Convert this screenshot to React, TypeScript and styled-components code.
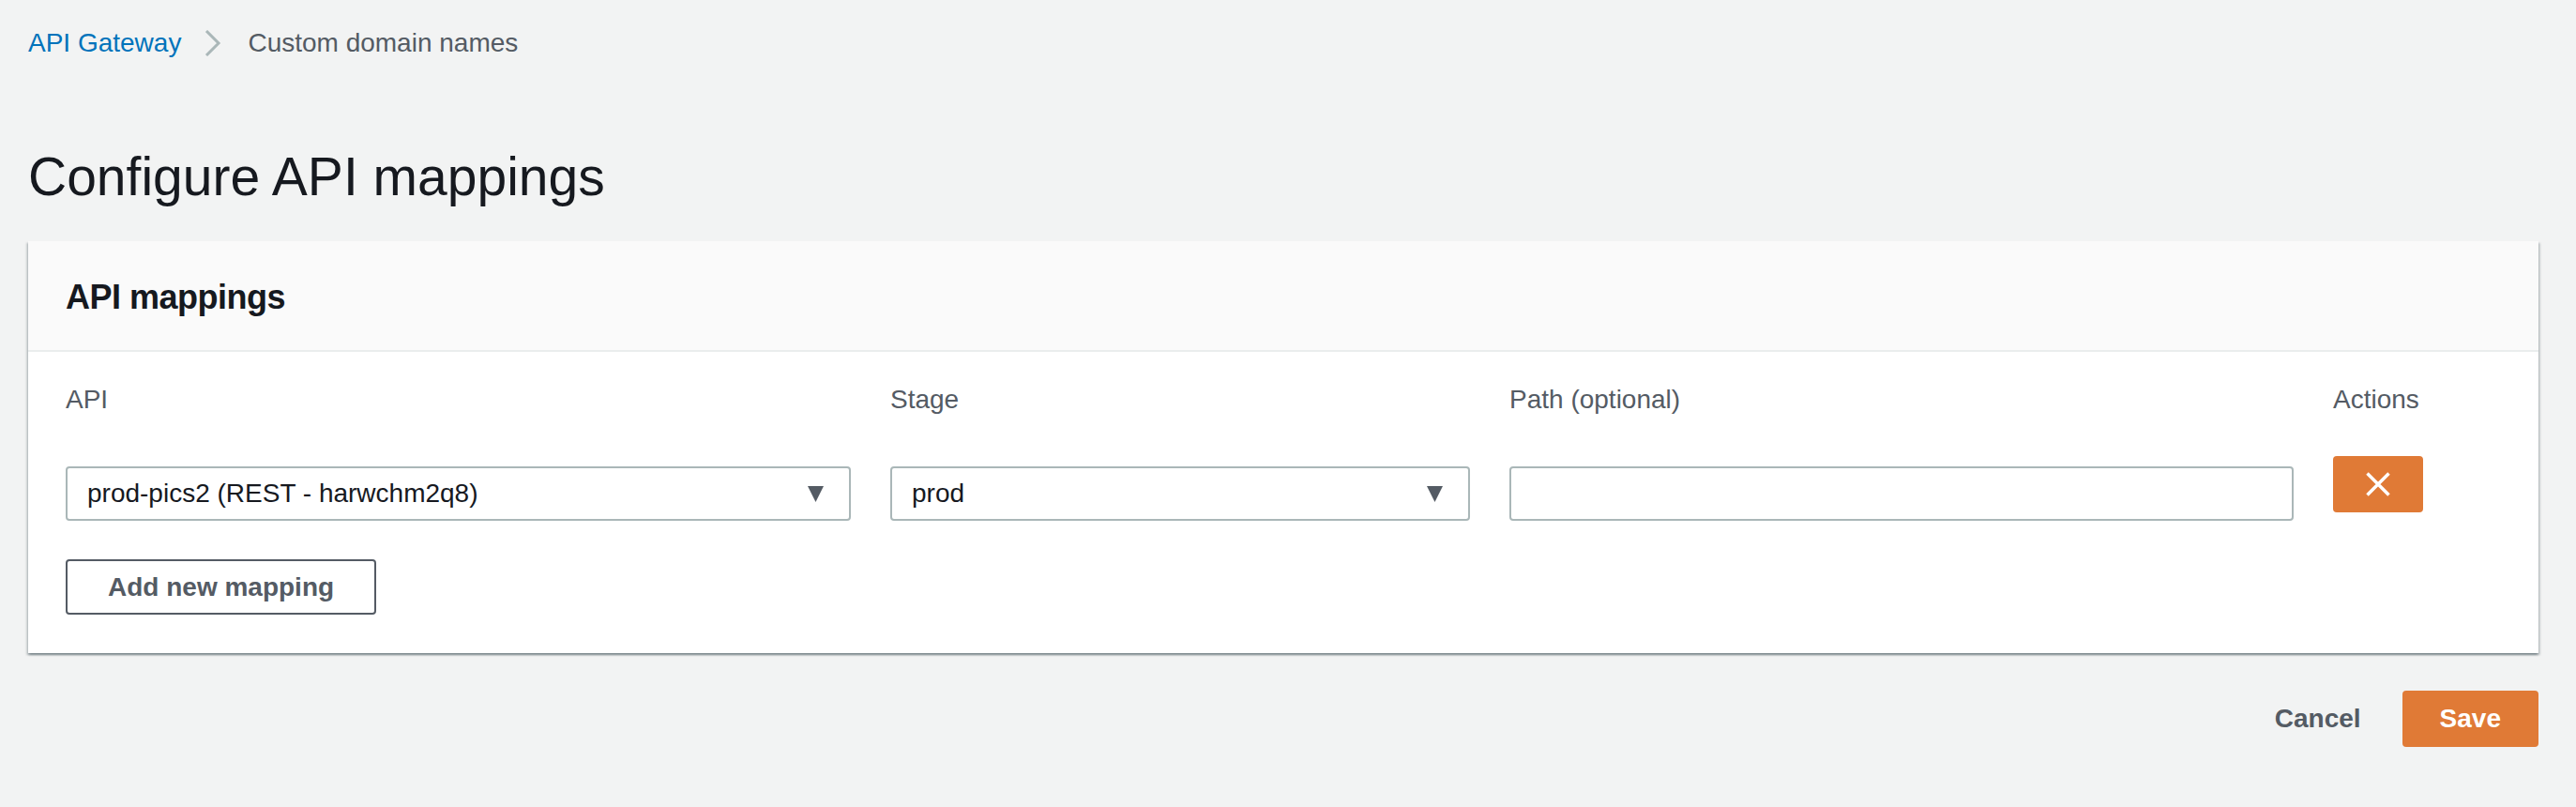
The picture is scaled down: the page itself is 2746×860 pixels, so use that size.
import React from "react";
import styled, { createGlobalStyle } from "styled-components";

const GlobalStyle = createGlobalStyle`
  html, body {
    margin: 0;
    padding: 0;
    background: #f2f3f3;
  }
  body {
    font-family: "Liberation Sans", Arial, sans-serif;
    color: #16191f;
  }
  * { box-sizing: border-box; }
`;

const Page = styled.div`
  padding: 26px 40px 40px 30px;
  min-height: 860px;
`;

const Breadcrumbs = styled.nav`
  display: flex;
  align-items: center;
  font-size: 28px;
  line-height: 40px;
  height: 40px;
`;

const Crumb = styled.a<{ $current?: boolean }>`
  color: ${(p) => (p.$current ? "#545b64" : "#0073bb")};
  text-decoration: none;
  cursor: ${(p) => (p.$current ? "default" : "pointer")};
`;

const Chevron = styled.svg`
  width: 20px;
  height: 28px;
  margin: 0 27px 0 24px;
  flex: none;
`;

const Title = styled.h1`
  margin: 86px 0 0 0;
  font-size: 57px;
  line-height: 72px;
  font-weight: 400;
  color: #16191f;
`;

const Panel = styled.section`
  margin-top: 33px;
  background: #ffffff;
  box-shadow: 0 2px 2px 0 rgba(0, 28, 36, 0.3),
    2px 2px 2px 0 rgba(0, 28, 36, 0.15),
    -2px 2px 2px 0 rgba(0, 28, 36, 0.15);
`;

const PanelHeader = styled.header`
  background: #fafafa;
  border-bottom: 2px solid #eaeded;
  padding: 34px 40px 30px;
`;

const PanelTitle = styled.h2`
  margin: 0;
  font-size: 36px;
  line-height: 52px;
  font-weight: 700;
  letter-spacing: -0.5px;
  color: #16191f;
`;

const PanelBody = styled.div`
  padding: 29px 40px 41px;
`;

const MappingGrid = styled.div`
  display: grid;
  grid-template-columns: 837px 618px 836px 1fr;
  column-gap: 42px;
  align-items: start;
`;

const Label = styled.div`
  font-size: 28px;
  line-height: 44px;
  color: #545b64;
  margin-bottom: 38px;
`;

const FieldBox = styled.div`
  margin-top: 11px;
  height: 58px;
  border: 2px solid #aab7b8;
  border-radius: 4px;
  background: #ffffff;
  display: flex;
  align-items: center;
  padding: 0 27px 0 21px;
  font-size: 28px;
  line-height: 54px;
  color: #16191f;
`;

const FieldValue = styled.span`
  flex: 1;
  white-space: nowrap;
`;

const Caret = styled.svg`
  width: 17px;
  height: 17px;
  flex: none;
`;

const DeleteButton = styled.button`
  width: 96px;
  height: 60px;
  border: none;
  border-radius: 4px;
  background: #e07a36;
  display: flex;
  align-items: center;
  justify-content: center;
  padding: 0;
  cursor: pointer;
`;

const AddButton = styled.button`
  margin-top: 41px;
  height: 59px;
  padding: 0 43px;
  border: 2px solid #545b64;
  border-radius: 4px;
  background: #ffffff;
  font-family: inherit;
  font-size: 28px;
  font-weight: 700;
  line-height: 55px;
  color: #545b64;
  cursor: pointer;
`;

const Footer = styled.div`
  display: flex;
  justify-content: flex-end;
  gap: 4px;
  margin-top: 40px;
`;

const FooterButton = styled.button<{ $primary?: boolean }>`
  height: 60px;
  padding: 0 40px;
  border: none;
  border-radius: 4px;
  background: ${(p) => (p.$primary ? "#e07a36" : "transparent")};
  color: ${(p) => (p.$primary ? "#ffffff" : "#545b64")};
  font-family: inherit;
  font-size: 28px;
  font-weight: 700;
  line-height: 60px;
  cursor: pointer;
`;

const Select: React.FC<{ value: string }> = ({ value }) => (
  <FieldBox>
    <FieldValue>{value}</FieldValue>
    <Caret viewBox="0 0 17 17">
      <polygon points="0,0 17,0 8.5,17" fill="#545b64" />
    </Caret>
  </FieldBox>
);

export default function App() {
  return (
    <>
      <GlobalStyle />
      <Page>
        <Breadcrumbs>
          <Crumb>API Gateway</Crumb>
          <Chevron viewBox="0 0 20 28">
            <polyline
              points="3,1 16,14 3,27"
              fill="none"
              stroke="#aab7b8"
              strokeWidth="3"
            />
          </Chevron>
          <Crumb $current>Custom domain names</Crumb>
        </Breadcrumbs>
        <Title>Configure API mappings</Title>
        <Panel>
          <PanelHeader>
            <PanelTitle>API mappings</PanelTitle>
          </PanelHeader>
          <PanelBody>
            <MappingGrid>
              <Label>API</Label>
              <Label>Stage</Label>
              <Label>Path (optional)</Label>
              <Label>Actions</Label>
              <Select value="prod-pics2 (REST - harwchm2q8)" />
              <Select value="prod" />
              <FieldBox>
                <FieldValue />
              </FieldBox>
              <DeleteButton aria-label="Remove mapping">
                <svg width="26" height="26" viewBox="0 0 26 26">
                  <path
                    d="M1.5 1.5 L24.5 24.5 M24.5 1.5 L1.5 24.5"
                    stroke="#ffffff"
                    strokeWidth="3.5"
                    fill="none"
                  />
                </svg>
              </DeleteButton>
            </MappingGrid>
            <AddButton>Add new mapping</AddButton>
          </PanelBody>
        </Panel>
        <Footer>
          <FooterButton>Cancel</FooterButton>
          <FooterButton $primary>Save</FooterButton>
        </Footer>
      </Page>
    </>
  );
}
